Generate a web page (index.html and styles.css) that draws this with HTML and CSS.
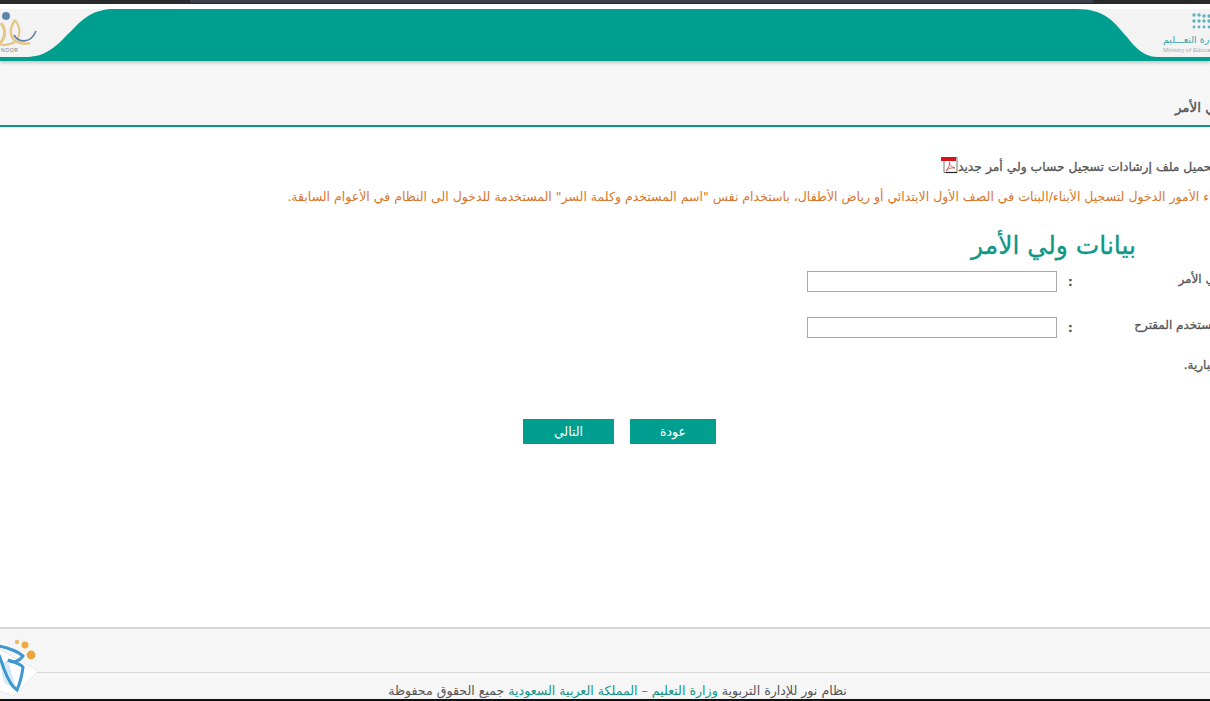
FILE: index.html
```html
<!DOCTYPE html>
<html lang="ar" dir="rtl">
<head>
    <meta charset="UTF-8">
    <meta name="viewport" content="width=device-width, initial-scale=1.0">
    <title>بيانات ولي الأمر</title>
    <link rel="stylesheet" href="styles.css">
</head>
<body>
    <div class="top-strip" dir="ltr"><div class="top-strip-tab"></div></div>

    <header class="banner" dir="ltr">
        <svg class="banner-left" width="115" height="52" viewBox="0 0 115 52">
            <path d="M0 0H115C95 0 85 8 75 18C65 28 58 36 50 41C42 46 35 48 25 48H0Z" fill="#f3f3f3"/>
            <circle cx="6" cy="7" r="4" fill="#5f86ad"/>
            <path d="M1 14C7 22 5 30 -1 35" fill="none" stroke="#e3c88a" stroke-width="3"/>
            <path d="M15 11C8 21 10 31 20 34C24 35 27 35 30 34" fill="none" stroke="#e3c88a" stroke-width="2.5"/>
            <path d="M15 11C20 17 21 24 17 31" fill="none" stroke="#e3c88a" stroke-width="2"/>
            <path d="M-2 35C4 37 10 36 15 33" fill="none" stroke="#e3c88a" stroke-width="2.5"/>
            <path d="M14 26C18 33 30 36 36 22" fill="none" stroke="#5f7fa8" stroke-width="1.6"/>
            <text class="noor-text" x="1" y="43">NOOR</text>
        </svg>
        <div class="banner-fill"></div>
        <svg class="banner-right" width="135" height="52" viewBox="0 0 135 52">
            <path d="M2 0C15 0 25 3 32 8C42 15 46 22 52 28C58 36 68 48 82 48H135V0Z" fill="#f3f3f3"/>
            <g fill="#5fb3b8">
                <circle cx="119" cy="6" r="1.7"/><circle cx="124" cy="6" r="1.7"/><circle cx="129" cy="7" r="1.7"/><circle cx="134" cy="7" r="1.7"/>
                <circle cx="119" cy="12" r="1.7"/><circle cx="124" cy="12" r="1.7"/><circle cx="129" cy="12" r="1.7"/><circle cx="134" cy="12" r="1.7"/>
                <circle cx="119" cy="18" r="1.4"/><circle cx="124" cy="18" r="1.4"/><circle cx="129" cy="18" r="1.4"/><circle cx="134" cy="18" r="1.4"/>
            </g>
            <text class="moe-ar" x="88" y="34">وزارة التعـــليم</text>
            <text class="moe-en" x="88" y="43">Ministry of Education</text>
        </svg>
    </header>

    <div class="title-band">
        <h2 class="page-title">بيانات ولي الأمر</h2>
    </div>

    <main class="content">
        <p class="guide-link">لتحميل ملف إرشادات تسجيل حساب ولي أمر جديد<svg class="pdf-icon" width="17" height="18" viewBox="0 0 17 18">
            <path d="M3 1.5H16V16.5H3Z" fill="#fff" stroke="#777" stroke-width="1"/>
            <path d="M5 16.5H16" stroke="#222" stroke-width="1.2"/>
            <path d="M0 1H15V5H0Z" fill="#d8131a"/>
            <path d="M5 15C8 11 9 8 8.5 6C8 8 10 11 14 12C11 11.5 8 12 5 15Z" fill="none" stroke="#d8555a" stroke-width="1"/>
        </svg></p>
        <p class="notice">على أولياء الأمور الدخول لتسجيل الأبناء/البنات في الصف الأول الابتدائي أو رياض الأطفال، باستخدام نفس "اسم المستخدم وكلمة السر" المستخدمة للدخول الى النظام في الأعوام السابقة.</p>

        <h1 class="form-title">بيانات ولي الأمر</h1>

        <div class="form-row">
            <label class="form-label" for="idNumber">هوية ولي الأمر</label>
            <span class="form-colon">:</span>
            <input class="form-input" type="text" id="idNumber">
        </div>
        <div class="form-row">
            <label class="form-label" for="userName">اسم المستخدم المقترح</label>
            <span class="form-colon">:</span>
            <input class="form-input" type="text" id="userName">
        </div>
        <p class="required-note">الإجبارية.</p>

        <div class="actions" dir="ltr">
            <button class="btn btn-next" type="button">التالي</button>
            <button class="btn btn-back" type="button">عودة</button>
        </div>
    </main>

    <footer class="site-footer">
        <div class="footer-top"></div>
        <div class="footer-bottom">
            نظام نور للإدارة التربوية <span class="footer-link">وزارة التعليم – المملكة العربية السعودية</span> جميع الحقوق محفوظة
        </div>
    </footer>

    <svg class="badge" width="44" height="66" viewBox="0 0 44 66" dir="ltr">
        <path d="M-8 12L38 38L14 63L-8 55Z" fill="#fff" stroke="#e8e8e8" stroke-width="1"/>
        <path d="M0 30L8 28L17 57L4 50Z" fill="#d5ebf8"/>
        <path d="M-2 13C8 14 20 20 23 23C19 29 12 30 8 27" fill="none" stroke="#3f97d0" stroke-width="3"/>
        <path d="M8 27C14 29 22 32 23 34C22 42 20 50 17 57C12 54 7 44 4 36C2 30 0 24 -2 20" fill="none" stroke="#3f97d0" stroke-width="3"/>
        <circle cx="17" cy="9" r="2.2" fill="#f0b765"/>
        <circle cx="25" cy="12" r="3.5" fill="#eeaa45"/>
        <circle cx="31" cy="22" r="4.4" fill="#eda43a"/>
    </svg>
</body>
</html>
```

FILE: styles.css
```css
* {
    margin: 0;
    padding: 0;
    box-sizing: border-box;
}

html, body {
    height: 100%;
}

body {
    font-family: "DejaVu Sans", sans-serif;
    background: white;
    color: #555;
    display: flex;
    flex-direction: column;
    overflow: hidden;
    position: relative;
}

.top-strip {
    height: 4px;
    background: #2a2a2c;
    margin-bottom: 5px;
    padding-left: 190px;
    flex: none;
}

.top-strip-tab {
    height: 3px;
    width: 903px;
    background: #3b404b;
}

.banner {
    display: flex;
    height: 52px;
    background: #009e8e;
    box-shadow: 0 2px 3px rgba(0, 0, 0, 0.2);
    flex: none;
    position: relative;
}

.banner-left, .banner-right {
    display: block;
    flex: none;
}

.banner-fill {
    flex: 1;
}

.noor-text {
    font-family: "Liberation Sans", sans-serif;
    font-size: 5px;
    letter-spacing: 0.6px;
    fill: #777;
}

.moe-ar {
    font-size: 9.5px;
    fill: #3ba6ac;
}

.moe-en {
    font-family: "Liberation Sans", sans-serif;
    font-size: 6.2px;
    fill: #aaa;
}

.title-band {
    height: 66px;
    background: #f6f6f6;
    border-bottom: 2px solid #0e9686;
    padding-top: 38px;
    margin-right: -54px;
    flex: none;
}

.page-title {
    font-size: 13.5px;
    font-weight: normal;
    -webkit-text-stroke: 0.4px #555;
    color: #555;
}

.content {
    flex: 1;
    margin-right: -35px;
}

.guide-link {
    font-size: 12.35px;
    color: #555;
    -webkit-text-stroke: 0.3px #555;
    margin-top: 30px;
    margin-right: 26px;
    display: flex;
    align-items: center;
    height: 20px;
}

.pdf-icon {
    margin-bottom: 4px;
}

.notice {
    font-size: 12.5px;
    color: #d9762a;
    margin-top: 12px;
    margin-right: -11px;
    white-space: nowrap;
}

.form-title {
    font-size: 25px;
    font-weight: normal;
    color: #0e9686;
    margin-top: 27px;
    margin-right: 109px;
    -webkit-text-stroke: 0.3px #0e9686;
}

.form-row {
    display: flex;
    align-items: center;
    height: 21px;
    margin-bottom: 25px;
}

.form-row:first-of-type {
    margin-top: 11px;
}

.form-label {
    width: 172px;
    font-size: 12px;
    color: #555;
    -webkit-text-stroke: 0.3px #555;
    margin: -5px -6px 0 6px;
    white-space: nowrap;
}

.form-colon {
    width: 16px;
    font-size: 13px;
    font-weight: bold;
}

.form-input {
    width: 250px;
    height: 21px;
    border: 1px solid #a9a9a9;
    background: white;
}

.required-note {
    font-size: 12px;
    color: #555;
    -webkit-text-stroke: 0.3px #555;
    margin-top: -5px;
    margin-right: 17px;
}

.actions {
    display: flex;
    gap: 16px;
    padding-left: 523px;
    margin-top: 47px;
}

.btn {
    height: 25px;
    background: #009e8e;
    color: white;
    border: none;
    font-family: "DejaVu Sans", sans-serif;
    font-size: 12.5px;
}

.btn-next {
    width: 91px;
}

.btn-back {
    width: 86px;
}

.site-footer {
    flex: none;
    background: #f6f6f6;
    border-top: 2px solid #d5d5d5;
    border-bottom: 2px solid #111;
}

.footer-top {
    height: 44px;
    border-bottom: 1px solid #d8d8d8;
}

.footer-bottom {
    height: 26px;
    font-size: 12.6px;
    color: #555;
    text-align: center;
    padding-top: 10px;
    padding-left: 25px;
    white-space: nowrap;
}

.footer-link {
    color: #0e9686;
}

.badge {
    position: absolute;
    left: 0;
    bottom: 2px;
}
```
